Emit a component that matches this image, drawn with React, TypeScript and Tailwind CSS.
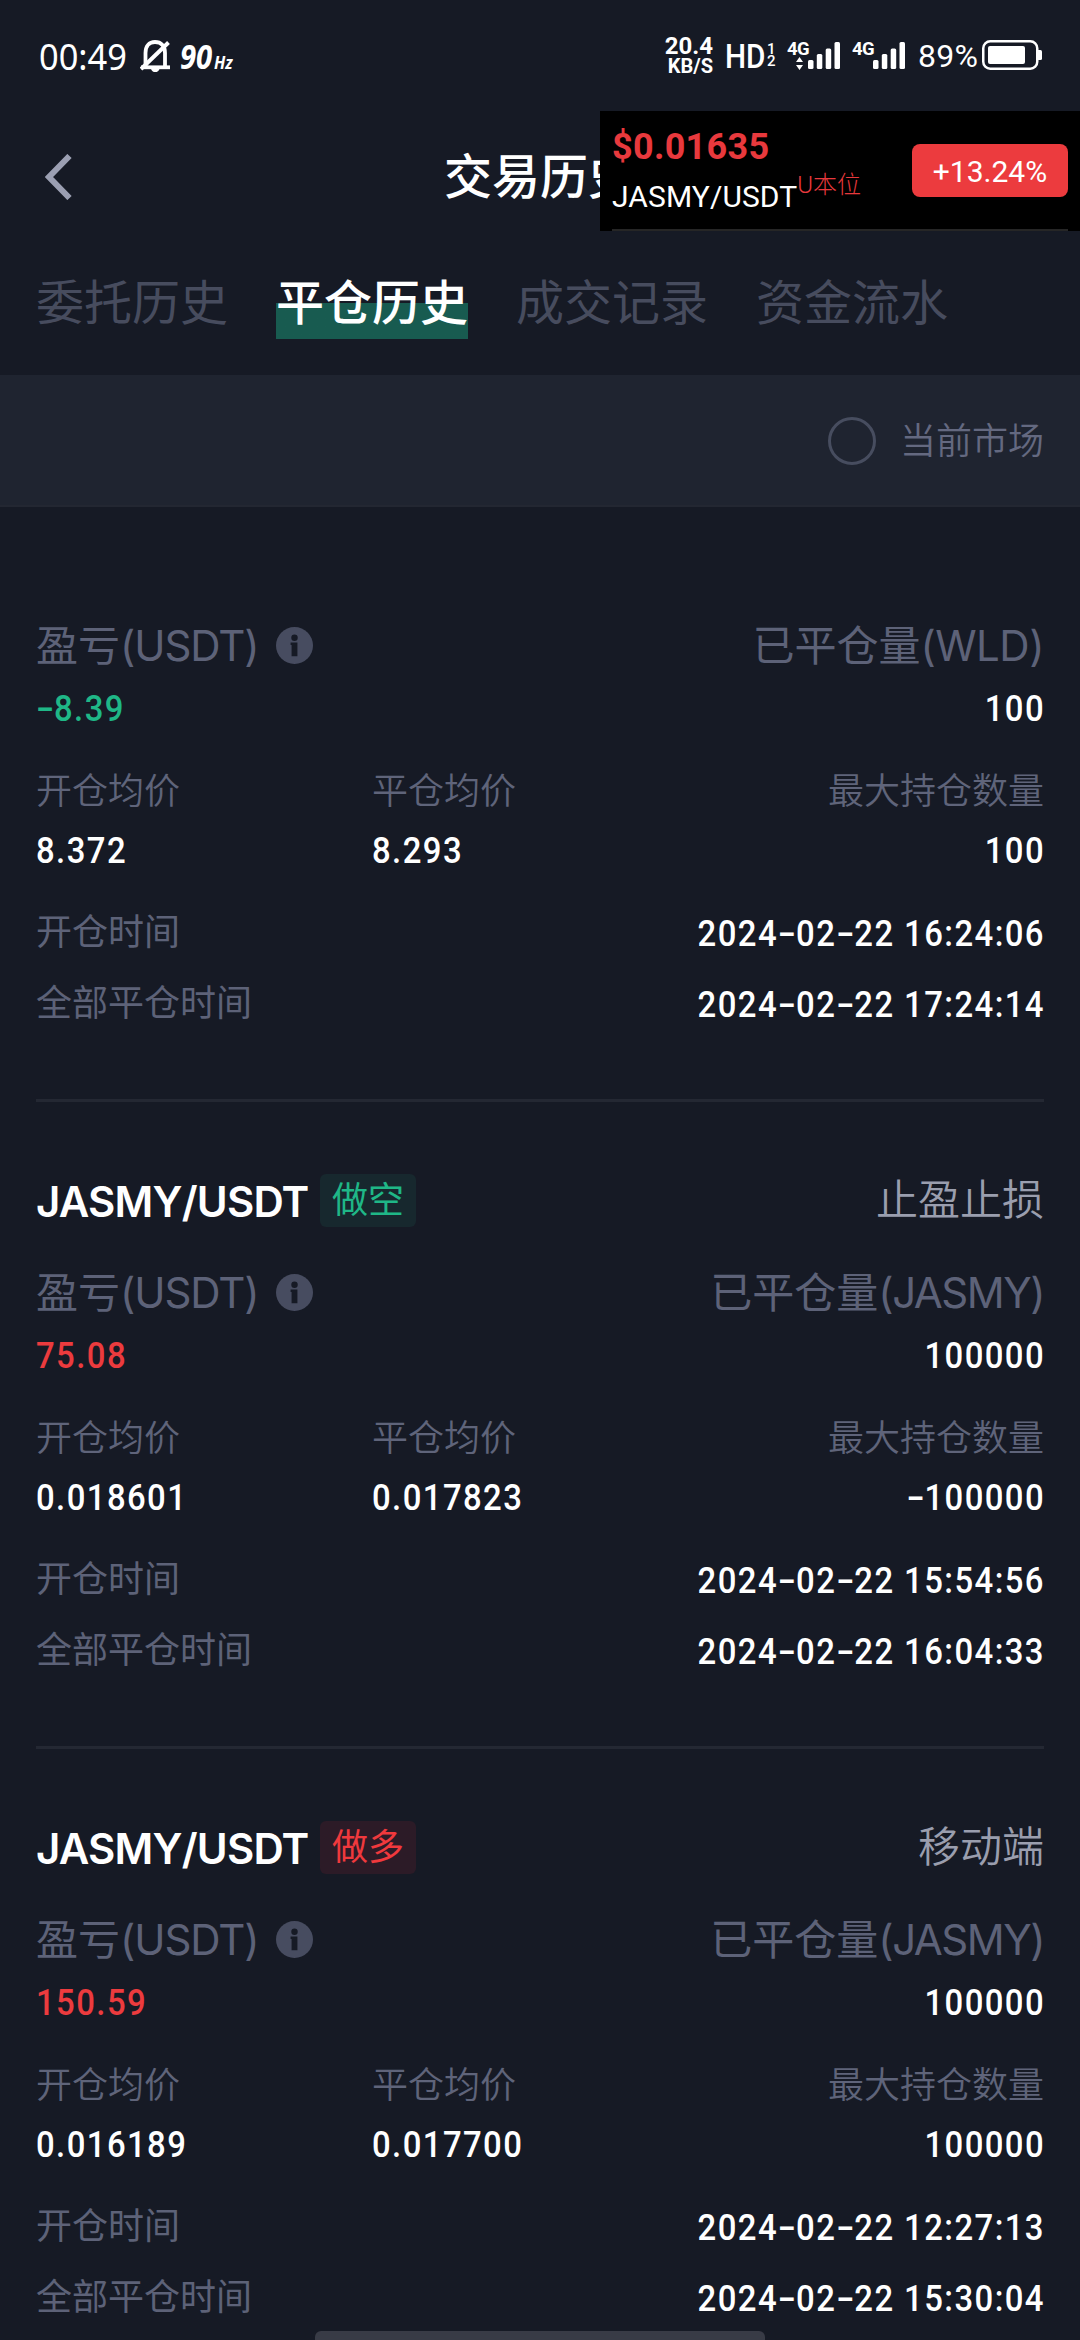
import React from "react";

type Trade = {
  symbol?: string;
  side?: "short" | "long";
  source?: string;
  coin: string;
  pnl: string;
  pnlUp: boolean;
  closed: string;
  open: string;
  close: string;
  max: string;
  openTime: string;
  closeTime: string;
};

const trades: Trade[] = [
  {
    coin: "WLD",
    pnl: "-8.39",
    pnlUp: false,
    closed: "100",
    open: "8.372",
    close: "8.293",
    max: "100",
    openTime: "2024-02-22 16:24:06",
    closeTime: "2024-02-22 17:24:14",
  },
  {
    symbol: "JASMY/USDT",
    side: "short",
    source: "止盈止损",
    coin: "JASMY",
    pnl: "75.08",
    pnlUp: true,
    closed: "100000",
    open: "0.018601",
    close: "0.017823",
    max: "-100000",
    openTime: "2024-02-22 15:54:56",
    closeTime: "2024-02-22 16:04:33",
  },
  {
    symbol: "JASMY/USDT",
    side: "long",
    source: "移动端",
    coin: "JASMY",
    pnl: "150.59",
    pnlUp: true,
    closed: "100000",
    open: "0.016189",
    close: "0.017700",
    max: "100000",
    openTime: "2024-02-22 12:27:13",
    closeTime: "2024-02-22 15:30:04",
  },
];

/* Narrow, well-spaced numerals with a widened dash, as in DIN-style figures. */
function Num({ text, right = false, className = "text-white" }: { text: string; right?: boolean; className?: string }) {
  return (
    <div
      className={`${
        right ? "-mr-[1px] origin-right" : "origin-left"
      } scale-x-[0.9] font-['Roboto',sans-serif] text-[36.500px] leading-10 font-medium tracking-[1.600px] whitespace-pre ${className}`}
    >
      {text.split(/(-)/).map((part, i) =>
        part === "-" ? (
          <span key={i} className="inline-block w-[20px] text-center tracking-normal">
            <span className="inline-block scale-x-[1.6]">-</span>
          </span>
        ) : (
          part
        ),
      )}
    </div>
  );
}

function Info() {
  return (
    <svg viewBox="0 0 38 38" className="ml-5 h-[37px] w-[37px]">
      <circle cx="19" cy="19" r="19" fill="#474c60" />
      <circle cx="19" cy="11" r="3.3" fill="#161a25" />
      <path d="M15 16h7v14h-6V18.5h-1z" fill="#161a25" />
    </svg>
  );
}

function SignalBars() {
  return (
    <svg viewBox="0 0 32 27" className="h-[27px] w-8 fill-white">
      <rect x="0" y="18" width="5.5" height="9" rx="1.5" />
      <rect x="8.8" y="12" width="5.5" height="15" rx="1.5" />
      <rect x="17.7" y="6.5" width="5.5" height="20.5" rx="1.5" />
      <rect x="26.5" y="0" width="5.5" height="27" rx="1.5" />
    </svg>
  );
}

function StatusBar() {
  return (
    <div className="flex h-[111px] items-start justify-between pt-9 pr-[38px] pl-[39px] font-['Roboto',sans-serif] text-white">
      <div className="flex h-10 items-center">
        <span className="w-[88px] font-['Noto_Sans',sans-serif] text-[37px] leading-10">
          <span className="inline-block origin-left scale-x-[0.93]">00:49</span>
        </span>
        <svg viewBox="0 0 30 32" className="ml-[13px] h-8 w-[30px]" fill="none" stroke="#fff" strokeWidth="3.8">
          <path d="M5.500 26V13C5.500 6 9 2 15 2s10 4 10 11v14" />
          <path d="M1 27.300h29" />
          <path d="M1 29 28.500 2.500" strokeWidth="4" />
          <path d="M11 28h8.500a4.200 4.200 0 0 1-8.500 0z" fill="#fff" stroke="none" />
        </svg>
        <span className="ml-2.5 flex items-baseline font-['Open_Sans',sans-serif] font-bold italic">
          <span className="w-[34px] text-[34px] leading-10">
            <span className="inline-block origin-left scale-x-[0.86]">90</span>
          </span>
          <span className="text-[17px] leading-5">
            <span className="inline-block origin-left scale-x-[0.95]">Hz</span>
          </span>
        </span>
      </div>
      <div className="flex items-start">
        <div className="flex w-[49px] flex-col items-end font-bold">
          <span className="text-2xl leading-5">20.4</span>
          <span className="text-[20px] leading-5">KB/S</span>
        </div>
        <div className="ml-3 flex w-[62px] pt-1">
          <span className="w-[42px] text-[33px] leading-[34px] font-medium">
            <span className="inline-block origin-left scale-x-[0.9]">HD</span>
          </span>
          <span className="flex flex-col pt-[3px] text-[15px] leading-3 font-medium">
            <span>1</span>
            <span>2</span>
          </span>
        </div>
        <div className="flex w-[65px] items-start pt-1.5">
          <div className="flex w-[21px] flex-col items-start">
            <span className="text-[18.500px] leading-[14px] font-bold tracking-[-0.5px]">4G</span>
            <svg viewBox="0 0 7 13" className="mt-px ml-[9px] h-[13px] w-[7px] fill-white">
              <path d="M3.500 0 7 5H0zM3.500 13 7 8H0z" />
            </svg>
          </div>
          <SignalBars />
        </div>
        <div className="flex w-[66px] items-start pt-1.5">
          <div className="w-[21px] text-[18.500px] leading-[14px] font-bold tracking-[-0.5px]">4G</div>
          <SignalBars />
        </div>
        <span className="w-[64px] pt-0.5 text-[32px] leading-9 tracking-[0.3px]">89%</span>
        <svg viewBox="0 0 60 30" className="mt-1 h-[30px] w-[60px]">
          <rect x="1.250" y="1.250" width="54" height="27.500" rx="7" fill="none" stroke="#fff" strokeWidth="2.500" />
          <rect x="6" y="6" width="37" height="18" rx="2" fill="#fff" />
          <path d="M56 10h2.500a1.500 1.500 0 0 1 1.500 1.500v7a1.500 1.500 0 0 1-1.500 1.500H56z" fill="#fff" />
        </svg>
      </div>
    </div>
  );
}

function PriceOverlay() {
  return (
    <div className="absolute top-[111px] right-0 flex h-[120px] w-[480px] flex-col bg-black px-3 font-['Roboto',sans-serif]">
      <div className="flex h-[118px] items-start justify-between">
        <div className="flex flex-col pt-4">
          <span className="text-[36px] leading-10 font-bold tracking-[0.3px] text-[#e8393d]">$0.01635</span>
          <div className="flex h-[50px] items-start text-white">
            <span className="pt-3 text-[30px] leading-9 tracking-[0.1px]">JASMY/USDT</span>
            <span className="font-['Roboto','Noto_Sans_CJK_SC',sans-serif] text-2xl leading-9 font-light text-[#e8393d]">
              U本位
            </span>
          </div>
        </div>
        <span className="mt-[33px] h-[53px] w-[156px] rounded-lg bg-[#ec3b3e] text-center text-[30px] leading-[55px] text-white">
          +13.24%
        </span>
      </div>
      <div className="h-0.5 bg-[#262626]" />
    </div>
  );
}

function Label({ children }: { children: string }) {
  return <span className="text-[36px] leading-10 font-[350] text-[#5f647a]">{children}</span>;
}

function TimeRow({ label, value }: { label: string; value: string }) {
  return (
    <div className="flex h-12 items-center justify-between">
      <span className="text-[36px] leading-10 text-[#5d6278]">{label}</span>
      <div className="pt-[9px]">
        <Num text={value} right />
      </div>
    </div>
  );
}

function TradeCard({ t }: { t: Trade }) {
  return (
    <section className="mx-9 border-b-[3px] border-[#242833] pb-[75px]">
      {t.symbol && (
        <div className="mb-[37px] flex h-[53px] items-center justify-between">
          <div className="flex items-center">
            <span className="w-[284px] pt-0.5 font-['Inter',sans-serif] text-[42px] leading-[50px] font-semibold tracking-[-0.8px] text-white">
              {t.symbol}
            </span>
            <span
              className={
                t.side === "short"
                  ? "h-[53px] w-24 rounded-md bg-[#17282e] text-center text-[36px] leading-[47px] text-[#1fb787]"
                  : "h-[53px] w-24 rounded-md bg-[#2c1b27] text-center text-[36px] leading-[47px] text-[#f0393d]"
              }
            >
              {t.side === "short" ? "做空" : "做多"}
            </span>
          </div>
          <span className="pb-[8px] text-[42px] leading-[44px] font-[350] text-[#9a9eae]">{t.source}</span>
        </div>
      )}
      <div className="flex h-[57px] items-center justify-between font-['Inter','Noto_Sans_CJK_SC',sans-serif] text-[42px] leading-[57px] whitespace-nowrap text-[#5d6278]">
        <div className="flex items-center">
          <span className="w-[220px]">
            盈亏<span className="tracking-[-1.1px]">(USDT)</span>
          </span>
          <Info />
        </div>
        <span>
          已平仓量
          <span className={t.coin === "WLD" ? "tracking-[-0.5px]" : "tracking-[-1.5px]"}>{`(${t.coin})`}</span>
        </span>
      </div>
      <div className="mt-[15px] flex justify-between">
        <Num text={t.pnl} className={t.pnlUp ? "text-[#ec3b3e]" : "text-[#1fb787]"} />
        <Num text={t.closed} right />
      </div>
      <div className="mt-[39px] grid grid-cols-3">
        <div className="flex flex-col gap-[23px]">
          <Label>开仓均价</Label>
          <Num text={t.open} />
        </div>
        <div className="flex flex-col gap-[23px]">
          <Label>平仓均价</Label>
          <Num text={t.close} />
        </div>
        <div className="flex flex-col items-end gap-[23px]">
          <Label>最大持仓数量</Label>
          <Num text={t.max} right />
        </div>
      </div>
      <div className="mt-[34px] flex flex-col gap-[23px]">
        <TimeRow label="开仓时间" value={t.openTime} />
        <TimeRow label="全部平仓时间" value={t.closeTime} />
      </div>
    </section>
  );
}

const tabs = ["委托历史", "平仓历史", "成交记录", "资金流水"];

export default function App() {
  return (
    <div
      lang="zh-CN"
      className="relative h-[2340px] w-[1080px] overflow-hidden bg-[#161a25] font-['Noto_Sans_CJK_SC',sans-serif]"
    >
      <StatusBar />
      <header className="grid h-32 grid-cols-3 items-center pb-0.5">
        <svg viewBox="0 0 27 46" className="mt-[6px] ml-[45px] h-[46px] w-[27px]" fill="none" stroke="#9b9fb2" strokeWidth="6">
          <path d="M24.500 2 4 23l20.500 21" />
        </svg>
        <h1 className="pb-[2px] text-center text-[48px] leading-[60px] font-medium text-white">交易历史</h1>
      </header>
      <nav className="flex h-[136px] gap-12 px-9 pt-[30px] text-[48px] leading-[60px]">
        {tabs.map((tab, i) => (
          <span
            key={tab}
            className={
              i === 1
                ? "h-[70px] bg-linear-to-b from-transparent from-[34px] to-[#185b50] to-[34px] font-medium text-white"
                : "h-[70px] text-[#474c5e]"
            }
          >
            {tab}
          </span>
        ))}
      </nav>
      <div className="flex h-[132px] items-center justify-end border-b-2 border-[#232732] bg-[#1f2430] pr-9">
        <span className="mt-0.5 size-12 rounded-full border-[3px] border-[#474d5f]" />
        <span className="ml-6 pb-[5px] text-[36px] leading-10 font-[350] text-[#646980]">当前市场</span>
      </div>
      <main className="flex flex-col gap-[72px] pt-[110px]">
        {trades.map((t) => (
          <TradeCard key={t.openTime} t={t} />
        ))}
      </main>
      <PriceOverlay />
      <div className="absolute bottom-0 left-[315px] h-[9px] w-[450px] rounded-t-md bg-[#383b46]" />
    </div>
  );
}
